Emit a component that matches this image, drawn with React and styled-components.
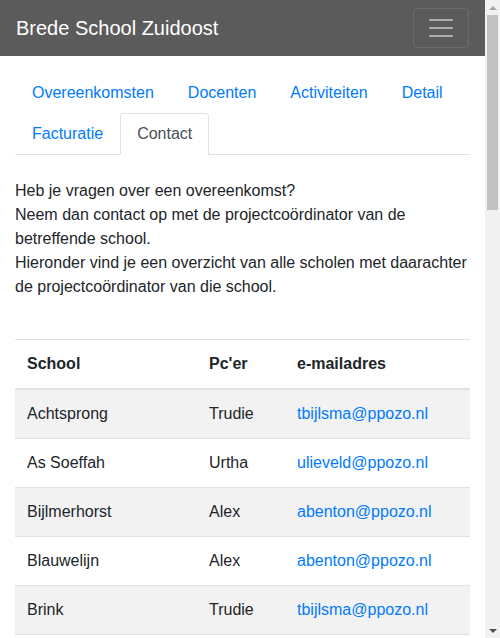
import React from "react";
import styled, { createGlobalStyle } from "styled-components";

const blue = "#007bff";
const text = "#212529";
const border = "#dee2e6";

const Global = createGlobalStyle`
    * { box-sizing: border-box; }
    body {
        margin: 0;
        font-family: "Liberation Sans", Arial, sans-serif;
        font-size: 16px;
        line-height: 1.5;
        color: ${text};
        background: #fff;
    }
`;

const Page = styled.div`
    margin-right: 15px;
`;

// drawn stand-in for the browser's scrollbar, which the headless shot hides
const ScrollRail = styled.div`
    position: fixed;
    top: 0;
    right: 0;
    bottom: 0;
    width: 15px;
    display: flex;
    flex-direction: column;
    background: #f1f1f1;
`;

const ScrollButton = styled.div`
    height: 15px;
    display: flex;
    align-items: center;
    justify-content: center;
    &::before {
        content: "";
        border-left: 4px solid transparent;
        border-right: 4px solid transparent;
        ${(p) =>
            p.$down
                ? "border-top: 4px solid #505050;"
                : "border-bottom: 4px solid #a3a3a3;"}
    }
`;

const ScrollTrack = styled.div`
    flex: 1;
    padding: 0 2px;
`;

const ScrollThumb = styled.div`
    height: 195px;
    background: #c1c1c1;
`;

const Navbar = styled.nav`
    display: flex;
    align-items: center;
    justify-content: space-between;
    height: 56px;
    padding: 8px 16px;
    background: #5b5b5b;
`;

const Brand = styled.a`
    color: #fff;
    font-size: 20px;
    line-height: 30px;
    text-decoration: none;
`;

const Toggler = styled.button`
    display: flex;
    align-items: center;
    justify-content: center;
    width: 56px;
    height: 40px;
    padding: 4px 12px;
    background: transparent;
    border: 1px solid rgba(255, 255, 255, 0.1);
    border-radius: 4px;
`;

const Container = styled.main`
    padding: 16px 15px 40px;
`;

const Tabs = styled.ul`
    display: flex;
    flex-wrap: wrap;
    list-style: none;
    margin: 0;
    padding: 0;
    border-bottom: 1px solid ${border};
`;

const Tab = styled.li`
    margin-bottom: -1px;
    a {
        display: block;
        padding: 8px 16px;
        border: 1px solid ${(p) => (p.$active ? border : "transparent")};
        border-bottom-color: ${(p) => (p.$active ? "#fff" : "transparent")};
        border-radius: 4px 4px 0 0;
        background: ${(p) => (p.$active ? "#fff" : "transparent")};
        color: ${(p) => (p.$active ? "#495057" : blue)};
        text-decoration: none;
    }
`;

const Intro = styled.p`
    margin: 24px 0 40px;
`;

const Table = styled.table`
    width: 100%;
    border-collapse: collapse;
    table-layout: fixed;
    th, td {
        padding: 12px;
        border-top: 1px solid ${border};
        text-align: left;
        vertical-align: top;
    }
    th {
        font-weight: 700;
        border-bottom: 2px solid ${border};
    }
    tbody tr:nth-of-type(odd) {
        background: rgba(0, 0, 0, 0.05);
    }
    a {
        color: ${blue};
        text-decoration: none;
    }
`;

const tabs = ["Overeenkomsten", "Docenten", "Activiteiten", "Detail", "Facturatie", "Contact"];

const schools = [
    ["Achtsprong", "Trudie", "tbijlsma@ppozo.nl"],
    ["As Soeffah", "Urtha", "ulieveld@ppozo.nl"],
    ["Bijlmerhorst", "Alex", "abenton@ppozo.nl"],
    ["Blauwelijn", "Alex", "abenton@ppozo.nl"],
    ["Brink", "Trudie", "tbijlsma@ppozo.nl"],
    ["Circul", "Urtha", "ulieveld@ppozo.nl"],
    ["Dolfijn", "Alex", "abenton@ppozo.nl"],
    ["Drostenburg", "Trudie", "tbijlsma@ppozo.nl"],
    ["Eenhoorn", "Urtha", "ulieveld@ppozo.nl"],
    ["Gaasperwaard", "Alex", "abenton@ppozo.nl"],
    ["Gein", "Trudie", "tbijlsma@ppozo.nl"],
    ["Hofgeest", "Urtha", "ulieveld@ppozo.nl"],
    ["Kikker", "Alex", "abenton@ppozo.nl"],
    ["Kraal", "Trudie", "tbijlsma@ppozo.nl"],
    ["Lampion", "Urtha", "ulieveld@ppozo.nl"],
    ["Leeuwenhoek", "Alex", "abenton@ppozo.nl"],
    ["Nellestein", "Trudie", "tbijlsma@ppozo.nl"],
    ["Nieuwe Kern", "Urtha", "ulieveld@ppozo.nl"],
    ["Polsstok", "Alex", "abenton@ppozo.nl"],
    ["Reigersbos", "Trudie", "tbijlsma@ppozo.nl"],
    ["Ruimte", "Urtha", "ulieveld@ppozo.nl"],
    ["Tamarinde", "Alex", "abenton@ppozo.nl"],
    ["Toermalijn", "Trudie", "tbijlsma@ppozo.nl"],
    ["Venserpolder", "Urtha", "ulieveld@ppozo.nl"],
    ["Vlinderboom", "Alex", "abenton@ppozo.nl"],
    ["Wereldboom", "Trudie", "tbijlsma@ppozo.nl"],
    ["Westerkim", "Urtha", "ulieveld@ppozo.nl"],
    ["Woudrichem", "Alex", "abenton@ppozo.nl"],
    ["Zevensprong", "Trudie", "tbijlsma@ppozo.nl"],
    ["Zonnehoek", "Urtha", "ulieveld@ppozo.nl"],
    ["Zuidoostpunt", "Alex", "abenton@ppozo.nl"],
    ["Zuidwester", "Trudie", "tbijlsma@ppozo.nl"],
];

export default function App() {
    return (
        <>
            <Global />
            <Page>
                <Navbar>
                    <Brand href="#">Brede School Zuidoost</Brand>
                    <Toggler aria-label="menu">
                        <svg width="30" height="30" viewBox="0 0 30 30">
                            <path
                                d="M4 7h22M4 15h22M4 23h22"
                                stroke="rgba(255,255,255,0.5)"
                                strokeWidth="2"
                                strokeLinecap="round"
                            />
                        </svg>
                    </Toggler>
                </Navbar>
                <Container>
                    <Tabs>
                        {tabs.map((t) => (
                            <Tab key={t} $active={t === "Contact"}>
                                <a href="#">{t}</a>
                            </Tab>
                        ))}
                    </Tabs>
                    <Intro>
                        Heb je vragen over een overeenkomst?
                        <br />
                        Neem dan contact op met de projectcoördinator van de betreffende school.
                        <br />
                        Hieronder vind je een overzicht van alle scholen met daarachter de projectcoördinator van die school.
                    </Intro>
                    <Table>
                        <colgroup>
                            <col style={{ width: 182 }} />
                            <col style={{ width: 88 }} />
                            <col />
                        </colgroup>
                        <thead>
                            <tr>
                                <th>School</th>
                                <th>Pc'er</th>
                                <th>e-mailadres</th>
                            </tr>
                        </thead>
                        <tbody>
                            {schools.map(([name, pc, mail]) => (
                                <tr key={name}>
                                    <td>{name}</td>
                                    <td>{pc}</td>
                                    <td>
                                        <a href={`mailto:${mail}`}>{mail}</a>
                                    </td>
                                </tr>
                            ))}
                        </tbody>
                    </Table>
                </Container>
            </Page>
            <ScrollRail>
                <ScrollButton />
                <ScrollTrack>
                    <ScrollThumb />
                </ScrollTrack>
                <ScrollButton $down />
            </ScrollRail>
        </>
    );
}
